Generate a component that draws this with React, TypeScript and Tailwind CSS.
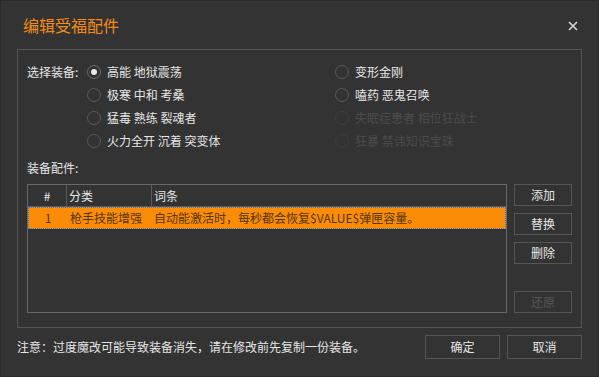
import React from "react";

const font = { fontFamily: '"Noto Sans CJK SC", "Noto Sans", sans-serif' };

function Radio({ label, checked, disabled }: { label: string; checked?: boolean; disabled?: boolean }) {
  return (
    <div className="flex items-center h-[23px]">
      <div
        className={
          "w-[14px] h-[14px] rounded-full border flex items-center justify-center " +
          (disabled ? "border-[#3e3e3e]" : checked ? "border-[#6a6a6a]" : "border-[#5a5a5a]")
        }
      >
        {checked && <div className="w-[6px] h-[6px] rounded-full bg-[#e8e8e8]" />}
      </div>
      <span className={"ml-[6px] text-[12px] leading-[16px] " + (disabled ? "text-[#4c4c4c]" : "text-[#e6e6e6]")}>{label}</span>
    </div>
  );
}

function Btn({ label, disabled, cls }: { label: string; disabled?: boolean; cls?: string }) {
  return (
    <div
      className={
        "border border-[#555] flex items-center justify-center text-[12px] leading-[16px] " +
        (disabled ? "text-[#565656] border-[#4a4a4a] " : "text-[#e6e6e6] ") +
        (cls || "")
      }
    >
      {label}
    </div>
  );
}

export default function App() {
  return (
    <div className="w-[599px] h-[377px] bg-[#333333] border border-[#2a2a2a] flex flex-col" style={font}>
      <div className="h-[48px] flex items-center justify-between pl-[22px] pr-[20px] shrink-0">
        <span className="text-[16px] leading-[20px] text-[#f28c16]">编辑受福配件</span>
        <svg width="10" height="10" viewBox="0 0 10 10" className="mt-[1px]">
          <path d="M1 1 L9 9 M9 1 L1 9" stroke="#d6d6d6" strokeWidth="1.6" />
        </svg>
      </div>
      <div className="mx-[16px] h-[279px] border border-[#555] flex flex-col px-[9px] pt-[10px] shrink-0">
        <div className="flex">
          <div className="w-[60px] flex flex-col">
            <div className="h-[23px] flex items-center text-[12px] leading-[16px] text-[#e6e6e6]">选择装备:</div>
          </div>
          <div className="w-[248px] flex flex-col">
            <Radio label="高能 地狱震荡" checked />
            <Radio label="极寒 中和 考桑" />
            <Radio label="猛毒 熟练 裂魂者" />
            <Radio label="火力全开 沉着 突变体" />
          </div>
          <div className="flex flex-col">
            <Radio label="变形金刚" />
            <Radio label="嗑药 恶鬼召唤" />
            <Radio label="失眠症患者 相位狂战士" disabled />
            <Radio label="狂暴 禁讳知识宝珠" disabled />
          </div>
        </div>
        <div className="mt-[8px] h-[16px] text-[12px] leading-[16px] text-[#e6e6e6]">装备配件:</div>
        <div className="mt-[8px] flex gap-[7px]">
          <div className="w-[480px] h-[129px] border border-[#686868] flex flex-col">
            <div className="h-[22px] flex border-b border-[#5a5a5a] text-[12px] leading-[16px] text-[#e6e6e6]">
              <div className="w-[39px] flex items-center justify-center border-r border-[#5a5a5a]">#</div>
              <div className="w-[85px] flex items-center pl-[2px] border-r border-[#5a5a5a]">分类</div>
              <div className="flex-1 flex items-center pl-[2px]">词条</div>
            </div>
            <div className="h-[22px] bg-[#fb8c08] border border-dotted border-[#3a7de0] flex items-center text-[12px] leading-[16px] text-[#553610]">
              <div className="w-[38px] text-center">1</div>
              <div className="w-[86px] pl-[3px]">枪手技能增强</div>
              <div className="flex-1 pl-[1px] whitespace-nowrap">自动能激活时，每秒都会恢复$VALUE$弹匣容量。</div>
            </div>
          </div>
          <div className="flex flex-col w-[58px]">
            <Btn label="添加" cls="h-[22px]" />
            <Btn label="替换" cls="h-[22px] mt-[7px]" />
            <Btn label="删除" cls="h-[22px] mt-[7px]" />
            <Btn label="还原" disabled cls="h-[22px] mt-[27px]" />
          </div>
        </div>
      </div>
      <div className="flex items-center mt-[7px] pl-[16px] pr-[16px]">
        <span className="flex-1 text-[12px] leading-[16px] text-[#e6e6e6]">注意：过度魔改可能导致装备消失，请在修改前先复制一份装备。</span>
        <Btn label="确定" cls="w-[75px] h-[24px]" />
        <Btn label="取消" cls="w-[75px] h-[24px] ml-[7px]" />
      </div>
    </div>
  );
}
